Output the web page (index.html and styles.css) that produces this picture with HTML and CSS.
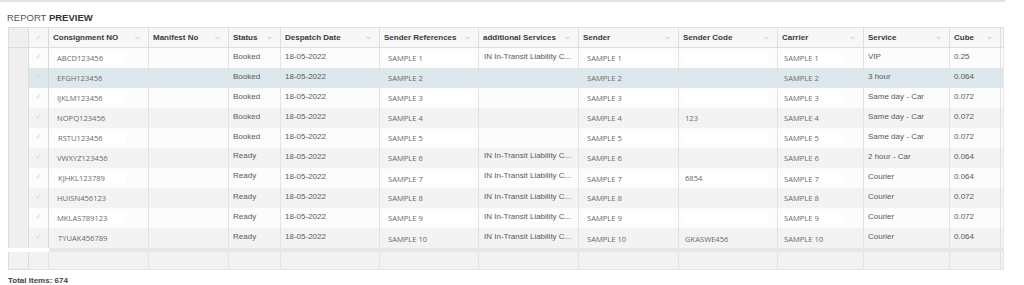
FILE: index.html
```html
<!DOCTYPE html>
<html>
<head>
<meta charset="utf-8">
<link rel="stylesheet" href="styles.css">
</head>
<body>
<div class="topline"></div>
<h1 class="title">REPORT <b>PREVIEW</b></h1>
<table class="grid">
<colgroup>
<col style="width:20px"><col style="width:20px"><col style="width:100px"><col style="width:80px"><col style="width:52px"><col style="width:99px"><col style="width:99px"><col style="width:100px"><col style="width:100px"><col style="width:99px"><col style="width:86px"><col style="width:86px"><col style="width:51px"><col style="width:3px">
</colgroup>
<thead>
<tr>
<th class="rh"></th><th class="ck"><span class="tick">✓</span></th>
<th><div class="hc">Consignment NO<svg class="chev" viewBox="0 0 6 4"><polyline points="0.5,0.5 3,3 5.5,0.5"/></svg></div></th>
<th><div class="hc">Manifest No<svg class="chev" viewBox="0 0 6 4"><polyline points="0.5,0.5 3,3 5.5,0.5"/></svg></div></th>
<th><div class="hc">Status<svg class="chev" viewBox="0 0 6 4"><polyline points="0.5,0.5 3,3 5.5,0.5"/></svg></div></th>
<th><div class="hc">Despatch Date<svg class="chev" viewBox="0 0 6 4"><polyline points="0.5,0.5 3,3 5.5,0.5"/></svg></div></th>
<th><div class="hc">Sender References<svg class="chev" viewBox="0 0 6 4"><polyline points="0.5,0.5 3,3 5.5,0.5"/></svg></div></th>
<th><div class="hc">additional Services<svg class="chev" viewBox="0 0 6 4"><polyline points="0.5,0.5 3,3 5.5,0.5"/></svg></div></th>
<th><div class="hc">Sender<svg class="chev" viewBox="0 0 6 4"><polyline points="0.5,0.5 3,3 5.5,0.5"/></svg></div></th>
<th><div class="hc">Sender Code<svg class="chev" viewBox="0 0 6 4"><polyline points="0.5,0.5 3,3 5.5,0.5"/></svg></div></th>
<th><div class="hc">Carrier<svg class="chev" viewBox="0 0 6 4"><polyline points="0.5,0.5 3,3 5.5,0.5"/></svg></div></th>
<th><div class="hc">Service<svg class="chev" viewBox="0 0 6 4"><polyline points="0.5,0.5 3,3 5.5,0.5"/></svg></div></th>
<th><div class="hc">Cube<svg class="chev" viewBox="0 0 6 4"><polyline points="0.5,0.5 3,3 5.5,0.5"/></svg></div></th>
<th class="sb"></th>
</tr>
</thead>
<tbody>
<tr class="odd"><td class="rh"></td><td class="ck"><span class="tick">✓</span></td><td class="in"><span class="box w1">ABCD123456</span></td><td></td><td class="tx">Booked</td><td class="tx">18-05-2022</td><td class="in"><span class="box w2">SAMPLE 1</span></td><td class="tx ad">IN In-Transit Liability C...</td><td class="in"><span class="box w2">SAMPLE 1</span></td><td class="in c6"><span class="box w3"></span></td><td class="in c6"><span class="box w4">SAMPLE 1</span></td><td class="tx">VIP</td><td class="tx">0.25</td><td class="sb"></td></tr>
<tr class="sel"><td class="rh"></td><td class="ck"><span class="tick">✓</span></td><td class="in"><span class="box w1">EFGH123456</span></td><td></td><td class="tx">Booked</td><td class="tx">18-05-2022</td><td class="in"><span class="box w2">SAMPLE 2</span></td><td class="tx ad"></td><td class="in"><span class="box w2">SAMPLE 2</span></td><td class="in c6"><span class="box w3"></span></td><td class="in c6"><span class="box w4">SAMPLE 2</span></td><td class="tx">3 hour</td><td class="tx">0.064</td><td class="sb"></td></tr>
<tr class="odd"><td class="rh"></td><td class="ck"><span class="tick">✓</span></td><td class="in"><span class="box w1">IJKLM123456</span></td><td></td><td class="tx">Booked</td><td class="tx">18-05-2022</td><td class="in"><span class="box w2">SAMPLE 3</span></td><td class="tx ad"></td><td class="in"><span class="box w2">SAMPLE 3</span></td><td class="in c6"><span class="box w3"></span></td><td class="in c6"><span class="box w4">SAMPLE 3</span></td><td class="tx">Same day - Car</td><td class="tx">0.072</td><td class="sb"></td></tr>
<tr class="even"><td class="rh"></td><td class="ck"><span class="tick">✓</span></td><td class="in"><span class="box w1">NOPQ123456</span></td><td></td><td class="tx">Booked</td><td class="tx">18-05-2022</td><td class="in"><span class="box w2">SAMPLE 4</span></td><td class="tx ad"></td><td class="in"><span class="box w2">SAMPLE 4</span></td><td class="in c6"><span class="box w3">123</span></td><td class="in c6"><span class="box w4">SAMPLE 4</span></td><td class="tx">Same day - Car</td><td class="tx">0.072</td><td class="sb"></td></tr>
<tr class="odd"><td class="rh"></td><td class="ck"><span class="tick">✓</span></td><td class="in sh"><span class="box w1">RSTU123456</span></td><td></td><td class="tx">Booked</td><td class="tx">18-05-2022</td><td class="in"><span class="box w2">SAMPLE 5</span></td><td class="tx ad"></td><td class="in"><span class="box w2">SAMPLE 5</span></td><td class="in c6"><span class="box w3"></span></td><td class="in c6"><span class="box w4">SAMPLE 5</span></td><td class="tx">Same day - Car</td><td class="tx">0.072</td><td class="sb"></td></tr>
<tr class="even"><td class="rh"></td><td class="ck"><span class="tick">✓</span></td><td class="in"><span class="box w1">VWXYZ123456</span></td><td></td><td class="tx up">Ready</td><td class="tx">18-05-2022</td><td class="in"><span class="box w2">SAMPLE 6</span></td><td class="tx ad up">IN In-Transit Liability C...</td><td class="in"><span class="box w2">SAMPLE 6</span></td><td class="in c6"><span class="box w3"></span></td><td class="in c6"><span class="box w4">SAMPLE 6</span></td><td class="tx">2 hour - Car</td><td class="tx">0.064</td><td class="sb"></td></tr>
<tr class="odd"><td class="rh"></td><td class="ck"><span class="tick">✓</span></td><td class="in sh"><span class="box w1">KJHKL123789</span></td><td></td><td class="tx up">Ready</td><td class="tx">18-05-2022</td><td class="in lo"><span class="box w2">SAMPLE 7</span></td><td class="tx ad up">IN In-Transit Liability C...</td><td class="in lo"><span class="box w2">SAMPLE 7</span></td><td class="in c6"><span class="box w3">6854</span></td><td class="in c6 lo"><span class="box w4">SAMPLE 7</span></td><td class="tx">Courier</td><td class="tx">0.064</td><td class="sb"></td></tr>
<tr class="even"><td class="rh"></td><td class="ck"><span class="tick">✓</span></td><td class="in"><span class="box w1">HUISN456123</span></td><td></td><td class="tx">Ready</td><td class="tx">18-05-2022</td><td class="in"><span class="box w2">SAMPLE 8</span></td><td class="tx ad">IN In-Transit Liability C...</td><td class="in"><span class="box w2">SAMPLE 8</span></td><td class="in c6"><span class="box w3"></span></td><td class="in c6"><span class="box w4">SAMPLE 8</span></td><td class="tx">Courier</td><td class="tx">0.072</td><td class="sb"></td></tr>
<tr class="odd"><td class="rh"></td><td class="ck"><span class="tick">✓</span></td><td class="in"><span class="box w1">MKLAS789123</span></td><td></td><td class="tx">Ready</td><td class="tx">18-05-2022</td><td class="in"><span class="box w2">SAMPLE 9</span></td><td class="tx ad">IN In-Transit Liability C...</td><td class="in"><span class="box w2">SAMPLE 9</span></td><td class="in c6"><span class="box w3"></span></td><td class="in c6"><span class="box w4">SAMPLE 9</span></td><td class="tx">Courier</td><td class="tx">0.072</td><td class="sb"></td></tr>
<tr class="even"><td class="rh"></td><td class="ck"><span class="tick">✓</span></td><td class="in sh"><span class="box w1">TYUAK456789</span></td><td></td><td class="tx">Ready</td><td class="tx">18-05-2022</td><td class="in lo"><span class="box w2">SAMPLE 10</span></td><td class="tx ad">IN In-Transit Liability C...</td><td class="in lo"><span class="box w2">SAMPLE 10</span></td><td class="in c6 lo"><span class="box w3">GKASWE456</span></td><td class="in c6 lo"><span class="box w4">SAMPLE 10</span></td><td class="tx">Courier</td><td class="tx">0.064</td><td class="sb"></td></tr>
<tr class="band"><td class="bw"></td><td class="bw"></td><td colspan="12" class="bg"></td></tr>
</tbody>
<tfoot>
<tr><td class="rh"></td><td></td><td></td><td></td><td></td><td></td><td></td><td></td><td></td><td></td><td></td><td></td><td></td><td class="sb"></td></tr>
</tfoot>
</table>
<div class="total">Total Items: 674</div>
</body>
</html>
```
FILE: styles.css
```css
html, body {
  margin: 0;
  padding: 0;
  background: #fff;
  font-family: "Liberation Sans", Arial, sans-serif;
}
.topline {
  width: 1005px;
  height: 2px;
  background: #e2e2e2;
}
.title {
  margin: 0;
  padding: 10px 0 0 7px;
  height: 15px;
  font-size: 9.5px;
  line-height: 11px;
  font-weight: normal;
  color: #555;
}
.title b {
  color: #333;
  font-weight: bold;
}
.grid {
  margin-left: 8px;
  border-collapse: collapse;
  table-layout: fixed;
  width: 995px;
  font-size: 8px;
  line-height: 10px;
}
.grid th {
  height: 19px;
  padding: 0;
  background: #f7f7f7;
  border: 1px solid #dedede;
  text-align: left;
  font-weight: bold;
  font-size: 8px;
  color: #3a3a3a;
  vertical-align: middle;
}
.hc {
  display: flex;
  align-items: center;
  justify-content: space-between;
  padding: 0 8px 0 4px;
  white-space: nowrap;
  overflow: hidden;
}
.chev {
  width: 5px;
  height: 4px;
  flex: none;
  fill: none;
  stroke: #b0b0b0;
  stroke-width: 0.9;
}
.grid td {
  height: 20px;
  padding: 0;
  border-left: 1px solid #e2e2e2;
  border-right: 1px solid #e2e2e2;
  vertical-align: top;
  white-space: nowrap;
  overflow: hidden;
}
tr.odd td { background: #fcfcfc; }
tr.even td { background: #f3f3f3; }
tr.sel td { background: #dce8ec; }
.grid td.rh, .grid th.rh {
  background: #efefef;
  border-color: #dcdcdc;
}
.grid td.ck, .grid th.ck {
  text-align: center;
  border-right-color: #d8d8d8;
}
.tick {
  display: block;
  height: 18px;
  font-size: 7px;
  color: #d0d0d0;
  line-height: 18px;
  font-family: "DejaVu Sans", sans-serif;
  overflow: hidden;
}
.tx {
  color: #5a5a5a;
}
.grid td.tx {
  padding: 4px 0 0 4px;
  height: 16px;
}
.grid td.tx.up { padding-top: 3px; height: 17px; }
.grid td.ad { padding-left: 5px; }
.grid td.in {
  padding: 5px 0 0 6px;
  height: 15px;
}
.grid td.in.lo { padding-top: 6px; height: 14px; }
.grid td.in.c6 { padding-left: 4px; }
.box {
  display: block;
  height: 11px;
  padding-left: 2px;
  font-family: "Open Sans", sans-serif;
  font-size: 7.6px;
  line-height: 11px;
  color: #6a6a6a;
  overflow: hidden;
}
tr.odd .box { background: #fff; }
.grid td.sh .box { padding-left: 3px; }
.w1 { width: 68px; }
.w2 { width: 86px; }
.w3 { width: 84px; }
.w4 { width: 60px; }
.grid td.sb { border-left: 1px solid #e2e2e2; border-right: 1px solid #e6e6e6; }
.grid tr.band td { height: 4px; padding: 0; border: none; }
.grid tr.band td.bw { background: #fff; }
.grid tr.band td.bg { background: #e6e6e6; }
.grid tfoot td {
  height: 17px;
  background: #f2f2f2;
  border-left: 1px solid #e2e2e2;
  border-right: 1px solid #e2e2e2;
  border-bottom: 1px solid #e6e6e6;
}
.grid tfoot td.rh { background: #f2f2f2; }
.total {
  padding: 6px 0 0 8px;
  font-size: 8px;
  font-weight: bold;
  color: #444;
  line-height: 10px;
}
```
